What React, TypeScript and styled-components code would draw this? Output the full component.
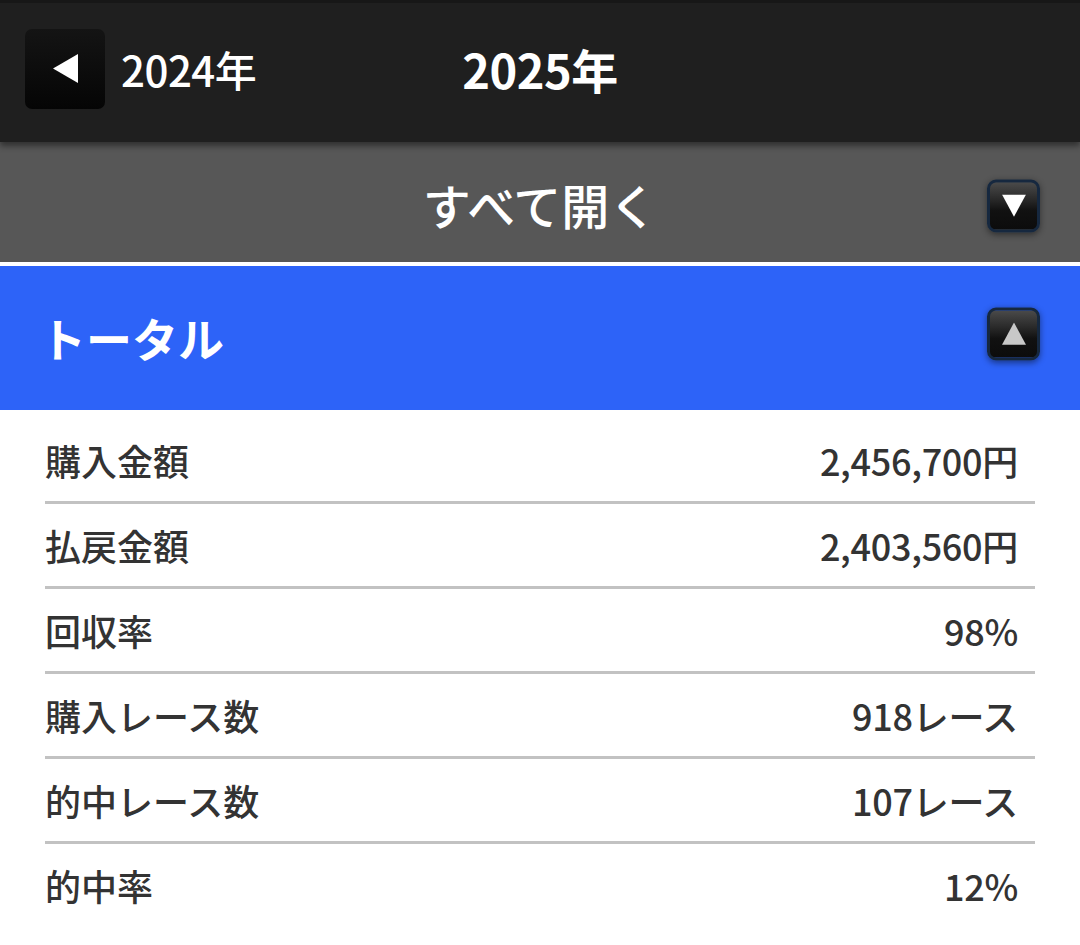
import React from "react";
import styled, { createGlobalStyle } from "styled-components";

const GlobalStyle = createGlobalStyle`
  html, body {
    margin: 0;
    padding: 0;
    background: #ffffff;
  }
  body {
    font-family: "Noto Sans CJK JP", "Noto Sans", sans-serif;
    -webkit-font-smoothing: antialiased;
  }
`;

const Page = styled.div`
  width: 1080px;
  min-height: 945px;
  background: #ffffff;
  overflow: hidden;
`;

const YearBar = styled.header`
  position: relative;
  z-index: 2;
  height: 142px;
  box-sizing: border-box;
  background: #1f1f1f;
  border-top: 3px solid #171717;
  display: grid;
  grid-template-columns: 1fr auto 1fr;
  align-items: center;
  padding: 0 25px;
  box-shadow: 0 4px 6px rgba(0, 0, 0, 0.45);
`;

const PrevGroup = styled.div`
  display: flex;
  align-items: center;
  gap: 16px;
  margin-top: -8px;
`;

const BackButton = styled.button`
  width: 80px;
  height: 80px;
  border: none;
  border-radius: 7px;
  background: linear-gradient(#141414, #050505);
  display: flex;
  align-items: center;
  justify-content: center;
  padding: 0;
  cursor: pointer;
`;

const YearLabel = styled.span<{ $current?: boolean }>`
  color: #ffffff;
  font-size: ${(p) => (p.$current ? 47 : 42)}px;
  font-weight: ${(p) => (p.$current ? 700 : 500)};
  line-height: 1;
  letter-spacing: -0.5px;
`;

const CenterYear = styled(YearLabel)`
  margin-top: -8px;
`;

const ExpandBar = styled.div`
  height: 120px;
  background: #575757;
  display: flex;
  align-items: center;
  justify-content: center;
  position: relative;
  border-bottom: 4px solid #ffffff;
`;

const ExpandLabel = styled.span`
  color: #ffffff;
  font-size: 48px;
  font-weight: 500;
  line-height: 1;
  margin-top: 4px;
`;

const ToggleButton = styled.button<{ $shift: number }>`
  position: absolute;
  right: 40px;
  top: 50%;
  transform: translateY(calc(-50% + ${(p) => p.$shift}px));
  width: 53px;
  height: 53px;
  box-sizing: border-box;
  border-radius: 9px;
  border: 3px solid #16283f;
  background: linear-gradient(#4a4a4a 0%, #2a2a2a 35%, #111111 60%, #0c0c0c 100%);
  box-shadow: 0 2px 6px rgba(0, 0, 0, 0.45);
  display: flex;
  align-items: center;
  justify-content: center;
  padding: 0;
  cursor: pointer;
`;

const SectionHead = styled.div`
  height: 144px;
  background: #2d63f8;
  display: flex;
  align-items: center;
  padding: 0 40px;
  position: relative;
`;

const SectionTitle = styled.h2`
  margin: 0;
  color: #ffffff;
  font-size: 46px;
  font-weight: 700;
  line-height: 1;
  margin-top: -2px;
`;

const StatList = styled.dl`
  margin: 0;
  padding: 9px 45px 0;
`;

const StatRow = styled.div<{ $last?: boolean }>`
  height: 82px;
  display: flex;
  align-items: center;
  justify-content: space-between;
  border-bottom: ${(p) => (p.$last ? "none" : "3px solid #c2c2c2")};
`;

const StatLabel = styled.dt`
  margin: 0;
  color: #333333;
  font-size: 36px;
  font-weight: 500;
  line-height: 1;
`;

const StatValue = styled.dd`
  margin: 0 17px 0 0;
  color: #333333;
  font-size: 36px;
  font-weight: 500;
  line-height: 1;
  letter-spacing: -0.3px;
`;

function Triangle(props: { dir: "left" | "down" | "up"; color: string; size: number }) {
  const { dir, color, size } = props;
  const points =
    dir === "left"
      ? "25,0 25,29 0,14.5"
      : dir === "down"
      ? "0,0 26,0 13,24"
      : "13,0 26,24 0,24";
  const vb = dir === "left" ? "0 0 25 29" : "0 0 26 24";
  return (
    <svg width={size} height={size * (dir === "left" ? 29 / 25 : 24 / 26)} viewBox={vb}>
      <polygon points={points} fill={color} />
    </svg>
  );
}

const stats = [
  { label: "購入金額", value: "2,456,700円" },
  { label: "払戻金額", value: "2,403,560円" },
  { label: "回収率", value: "98%" },
  { label: "購入レース数", value: "918レース" },
  { label: "的中レース数", value: "107レース" },
  { label: "的中率", value: "12%" },
];

export default function App() {
  return (
    <Page>
      <GlobalStyle />
      <YearBar>
        <PrevGroup>
          <BackButton aria-label="前の年">
            <Triangle dir="left" color="#ffffff" size={25} />
          </BackButton>
          <YearLabel>2024年</YearLabel>
        </PrevGroup>
        <CenterYear $current>2025年</CenterYear>
        <div />
      </YearBar>
      <ExpandBar>
        <ExpandLabel>すべて開く</ExpandLabel>
        <ToggleButton $shift={4} aria-label="すべて開く">
          <Triangle dir="down" color="#ffffff" size={24} />
        </ToggleButton>
      </ExpandBar>
      <SectionHead>
        <SectionTitle>トータル</SectionTitle>
        <ToggleButton $shift={-4} aria-label="閉じる">
          <Triangle dir="up" color="#c8c8c8" size={24} />
        </ToggleButton>
      </SectionHead>
      <StatList>
        {stats.map((s, i) => (
          <StatRow key={s.label} $last={i === stats.length - 1}>
            <StatLabel>{s.label}</StatLabel>
            <StatValue>{s.value}</StatValue>
          </StatRow>
        ))}
      </StatList>
    </Page>
  );
}
